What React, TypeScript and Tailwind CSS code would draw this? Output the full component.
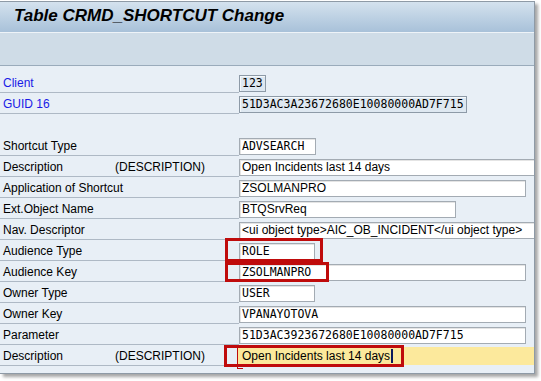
import React from 'react';

type Row = {
  label?: string;
  tech?: string;
  blue?: boolean;
  value?: string;
  w?: string;
  mono?: boolean;
  ro?: boolean;
  hl?: boolean;
  blank?: boolean;
};

const rows: Row[] = [
  { label: 'Client', blue: true, value: '123', w: 'w-[27px]', mono: true, ro: true },
  { label: 'GUID 16', blue: true, value: '51D3AC3A23672680E10080000AD7F715', w: 'w-[228px]', mono: true, ro: true },
  { blank: true },
  { label: 'Shortcut Type', value: 'ADVSEARCH', w: 'w-[77px]', mono: true },
  { label: 'Description', tech: '(DESCRIPTION)', value: 'Open Incidents last 14 days', w: 'w-[310px]' },
  { label: 'Application of Shortcut', value: 'ZSOLMANPRO', w: 'w-[287px]' },
  { label: 'Ext.Object Name', value: 'BTQSrvReq', w: 'w-[217px]' },
  { label: 'Nav. Descriptor', value: '<ui object type>AIC_OB_INCIDENT</ui object type>', w: 'w-[310px]' },
  { label: 'Audience Type', value: 'ROLE', w: 'w-[76px]', mono: true },
  { label: 'Audience Key', value: 'ZSOLMANPRO', w: 'w-[287px]', mono: true },
  { label: 'Owner Type', value: 'USER', w: 'w-[76px]', mono: true },
  { label: 'Owner Key', value: 'VPANAYOTOVA', w: 'w-[287px]', mono: true },
  { label: 'Parameter', value: '51D3AC3923672680E10080000AD7F715', w: 'w-[287px]', mono: true },
  { label: 'Description', tech: '(DESCRIPTION)', value: 'Open Incidents last 14 days', hl: true },
];

function Field({ row }: { row: Row }) {
  const font = row.mono
    ? "font-['DejaVu_Sans_Mono',monospace] text-[11.5px]"
    : "font-['Liberation_Sans',Arial,sans-serif] text-[12px]";

  if (row.hl) {
    return (
      <div className="self-end -ml-px mb-px flex h-[18px] w-[297px] shrink-0 items-center bg-[#fce99c] pl-[4px] font-['Liberation_Sans',Arial,sans-serif] text-[12px] text-black">
        <span className="whitespace-nowrap leading-[15px]">{row.value}</span>
        <span className="ml-px h-[14px] w-[2px] bg-[#0b1a5c]" />
      </div>
    );
  }

  return (
    <div
      className={`${row.w} self-end mb-px flex h-[17px] shrink-0 items-center overflow-hidden border px-[2px] text-black ${font} ${
        row.ro
          ? 'border-[#8d9aa7] bg-[#dee8f1] shadow-[inset_1px_1px_0_#f4f8fb]'
          : 'border-[#a3abb3] bg-white shadow-[inset_1px_1px_0_#e4e4e4]'
      }`}
    >
      <span className="whitespace-nowrap leading-[15px]">{row.value}</span>
    </div>
  );
}

export default function App() {
  return (
    <div className="h-[381px] w-[541px] overflow-hidden bg-white font-['Liberation_Sans',Arial,sans-serif]">
      <div className="relative mt-px flex h-[373px] w-[535px] flex-col border-t border-r border-b border-[#8e9aa6] shadow-[3px_3px_3px_rgba(0,0,0,0.35)]">
        {/* title bar */}
        <div className="flex h-[31px] items-center border-b border-[#eef3f8] bg-gradient-to-b from-[#d4e2ee] to-[#a8c1d9] pb-[3px] pl-[14px]">
          <span className="text-[17px] font-bold italic leading-none text-black">Table CRMD_SHORTCUT Change</span>
        </div>

        {/* toolbar */}
        <div className="h-[33px] border-b border-[#9aabbb] bg-[#cfdce7]" />

        {/* content */}
        <div className="flex-1 overflow-hidden bg-[#e8eff6] pt-[6px]">
          {rows.map((row, i) => (
            <div key={i} className="flex h-[21px]">
              <div
                className={`flex h-[21px] w-[239px] shrink-0 items-center pl-[3px] pt-[2px] text-[12px] leading-none ${
                  row.blank ? '' : 'border-b border-[#aeb9c5]'
                } ${row.blue ? 'text-[#1a1ae6]' : 'text-black'}`}
              >
                {row.tech ? (
                  <>
                    <span className="w-[112px]">{row.label}</span>
                    <span>{row.tech}</span>
                  </>
                ) : (
                  <span>{row.label}</span>
                )}
              </div>
              {!row.blank && <Field row={row} />}
            </div>
          ))}
        </div>

        {/* red annotation boxes */}
        <div className="absolute left-[225px] top-[236px] h-[24px] w-[98px] border-[3px] border-[#bf0b0b]" />
        <div className="absolute left-[225px] top-[260px] h-[20px] w-[104px] border-[3px] border-[#bf0b0b]" />
        <div className="absolute left-[224px] top-[343px] h-[22px] w-[180px] border-[3px] border-[#bf0b0b]" />
        <div className="absolute left-[237px] top-[344px] h-[23px] w-[6px] border-l border-b border-[#bf0b0b]" />
      </div>
    </div>
  );
}
